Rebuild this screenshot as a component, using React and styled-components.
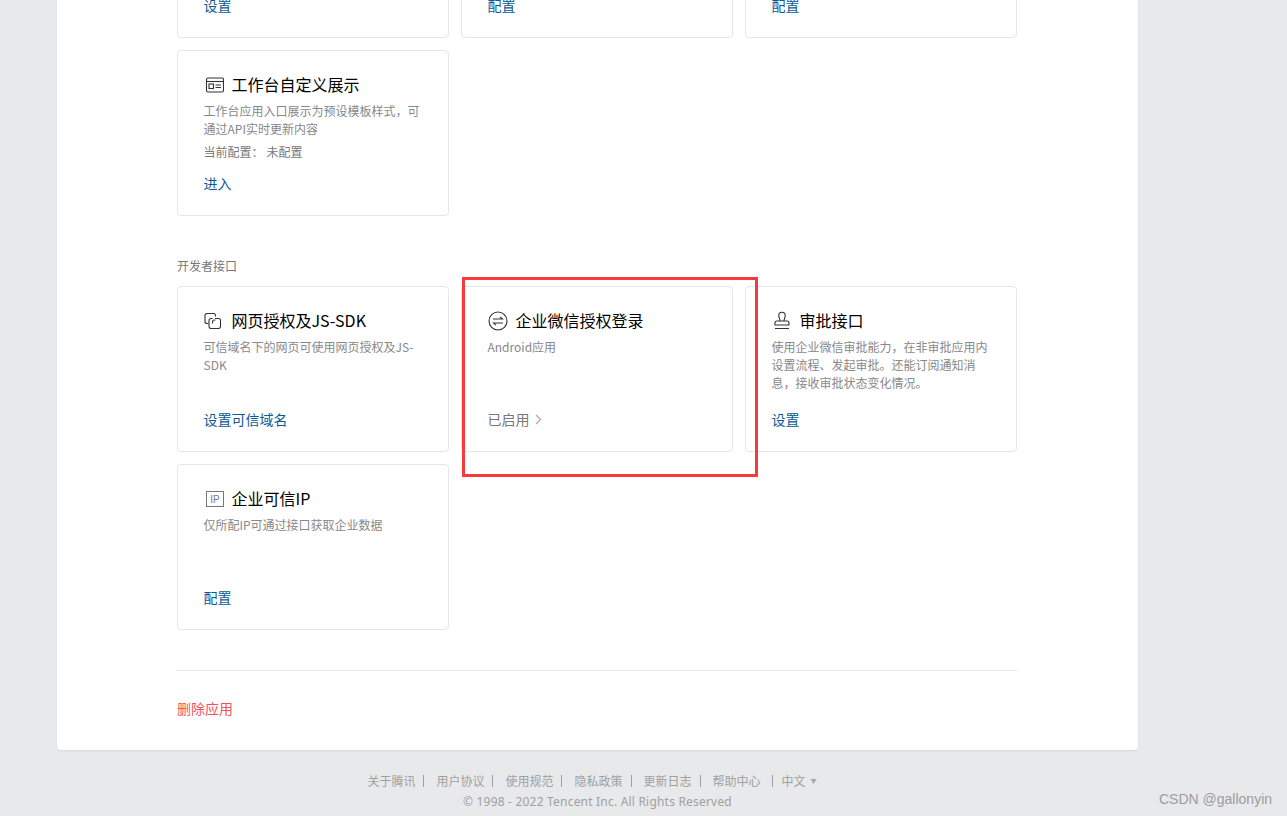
import React from "react";
import styled, { createGlobalStyle } from "styled-components";

const Global = createGlobalStyle`
  html, body { margin: 0; padding: 0; height: 816px; overflow: hidden; background: #e8e9eb; }
  body { font-family: "Noto Sans CJK SC", "Noto Sans", sans-serif; }
  * { box-sizing: border-box; }
`;
const Page = styled.div`
  position: relative; width: 1287px; height: 816px; overflow: hidden;
`;
const Column = styled.div`
  width: 1081px; margin-left: 57px; margin-top: -128px;
`;
const Panel = styled.main`
  background: #fff; border-radius: 0 0 4px 4px; padding: 0 121px 32px 120px;
  box-shadow: 0 1px 2px rgba(0,0,0,.08);
`;
const Grid = styled.section`
  display: grid; grid-template-columns: repeat(3, 272px); grid-auto-rows: 166px; gap: 12px;
`;
const Label = styled.h3`
  margin: 41px 0 12px; font-size: 12px; line-height: 17px; font-weight: 400; color: #787878;
`;
const Card = styled.article`
  display: flex; flex-direction: column; border: 1px solid #e4e6e9; border-radius: 4px;
  padding: 23px 26px 22px 25.5px; background: #fff;
`;
const Title = styled.div`
  display: flex; align-items: center; height: 22px; font-size: 16px; line-height: 22px; color: #000;
  margin-top: -1px; margin-bottom: 2px;
`;
const IconSlot = styled.span`
  display: flex; width: 28px; height: 22px; padding-top: 2px; align-items: center; color: #333;
  svg { display: block; }
`;
const Desc = styled.p`
  margin: 5px 0 0; font-size: 12px; line-height: 18px; color: #888;
`;
const Config = styled.p`
  margin: 5px 0 0; font-size: 12px; line-height: 18px; color: #787878;
`;
const ConfigValue = styled.span`
  margin-left: 3px;
`;
const Action = styled.a`
  margin-top: auto; font-size: 14px; line-height: 20px; display: flex; align-items: center;
  color: ${p => (p.$muted ? "#787878" : "#0b5a94")};
  svg { margin-left: 5px; }
`;
const Divider = styled.hr`
  border: 0; border-top: 1px solid #e4e6e9; margin: 40px 0 27px;
`;
const Delete = styled.a`
  display: block; font-size: 14px; line-height: 20px; color: #f4525b;
`;
const Footer = styled.footer`
  text-align: center; padding-top: 21px; font-size: 12px; color: #a0a0a0;
`;
const Links = styled.nav`
  display: flex; justify-content: center; align-items: center; height: 20px; line-height: 20px;
  padding-right: 11px;
`;
const Sep = styled.i`
  display: block; width: 1px; height: 12px; background: #a0a0a0;
  margin: ${p => (p.$last ? "0 9px 0 11px" : "0 12px 0 8px")};
`;
const Caret = styled.span`
  font-size: 6px; margin-left: 5px; color: #a8a8a8;
`;
const Copyright = styled.div`
  line-height: 20px; margin-top: 1px; letter-spacing: .2px; font-family: "Noto Sans", "Noto Sans CJK SC", sans-serif;
`;
const RedBox = styled.div`
  position: absolute; left: 462px; top: 277px; width: 296px; height: 200px;
  border: 3px solid #f83a3a; pointer-events: none;
`;
const Watermark = styled.div`
  position: absolute; left: 1159px; top: 790px; font: 14px/18px "Liberation Sans", sans-serif;
  color: #9c9c9c;
`;

const IconWidget = () => (
  <svg width="20" height="16" viewBox="0 0 20 16" fill="none" stroke="#333" strokeWidth="1.1">
    <rect x="2.500" y="1" width="17" height="14" rx="1.500" />
    <path d="M2.500 4.500h17" />
    <rect x="5" y="7" width="4.500" height="4.500" />
    <path d="M11.500 8h5.500M11.500 10.500h5.500" />
  </svg>
);
const IconLink = () => (
  <svg width="20" height="16" viewBox="0 0 20 16" fill="none" stroke="#333" strokeWidth="1.1">
    <path d="M4.500 10.500h-1.500a2 2 0 0 1-2-2V2.500a2 2 0 0 1 2-2h6.500a2 2 0 0 1 2 2v1" />
    <path d="M5 7.500a2 2 0 0 1 2-2h1.500M11 5.500h3.500a2 2 0 0 1 2 2v6a2 2 0 0 1-2 2H7a2 2 0 0 1-2-2v-6" />
    <path d="M8.500 10.500V9a2 2 0 0 1 2-2h1" />
  </svg>
);
const IconSwap = () => (
  <svg width="20" height="20" viewBox="0 0 20 20" fill="none" stroke="#333" strokeWidth="1.1">
    <circle cx="10" cy="10" r="9" />
    <path d="M5 8h9.500l-2.500-2.200M15 12H5.500L8 14.200" />
  </svg>
);
const IconStamp = () => (
  <svg width="20" height="20" viewBox="0 0 20 20" fill="none" stroke="#333" strokeWidth="1.1">
    <path d="M8 10C8 7.500 6.800 7 6.800 4.500a3.200 3.200 0 0 1 6.400 0C13.200 7 12 7.500 12 10" />
    <path d="M3 14v-2a2 2 0 0 1 2-2h10a2 2 0 0 1 2 2v2zM3 17.500h14" />
  </svg>
);
const IconIP = () => (
  <svg width="20" height="16" viewBox="0 0 20 16" fill="none">
    <rect x="2.500" y="0.500" width="17" height="15" stroke="#777" />
    <text x="11" y="11.500" textAnchor="middle" fontSize="10" fill="#777" fontFamily="Liberation Sans, sans-serif">IP</text>
  </svg>
);
const Chevron = () => (
  <svg width="7" height="11" viewBox="0 0 7 11" fill="none" stroke="#aaa" strokeWidth="1.3">
    <path d="M1 1l4.500 4.500L1 10" />
  </svg>
);

const appCards = [
  { action: "设置" },
  { action: "配置" },
  { action: "配置" },
  {
    icon: <IconWidget />, title: "工作台自定义展示",
    desc: "工作台应用入口展示为预设模板样式，可通过API实时更新内容",
    config: "未配置", action: "进入",
  },
];
const devCards = [
  { icon: <IconLink />, title: "网页授权及JS-SDK", desc: "可信域名下的网页可使用网页授权及JS-SDK", action: "设置可信域名" },
  { icon: <IconSwap />, title: "企业微信授权登录", desc: "Android应用", action: "已启用", muted: true },
  { icon: <IconStamp />, title: "审批接口", desc: "使用企业微信审批能力，在非审批应用内设置流程、发起审批。还能订阅通知消息，接收审批状态变化情况。", action: "设置" },
  { icon: <IconIP />, title: "企业可信IP", desc: "仅所配IP可通过接口获取企业数据", action: "配置" },
];
const footerLinks = ["关于腾讯", "用户协议", "使用规范", "隐私政策", "更新日志"];

const AppCard = ({ icon, title, desc, config, action, muted }) => (
  <Card>
    {title && <Title><IconSlot>{icon}</IconSlot>{title}</Title>}
    {desc && <Desc>{desc}</Desc>}
    {config && <Config>当前配置：<ConfigValue>{config}</ConfigValue></Config>}
    <Action $muted={muted}>{action}{muted && <Chevron />}</Action>
  </Card>
);

export default function App() {
  return (
    <Page>
      <Global />
      <Column>
        <Panel>
          <Grid>{appCards.map((c, i) => <AppCard key={i} {...c} />)}</Grid>
          <Label>开发者接口</Label>
          <Grid>{devCards.map((c, i) => <AppCard key={i} {...c} />)}</Grid>
          <Divider />
          <Delete>删除应用</Delete>
        </Panel>
        <Footer>
          <Links>
            {footerLinks.map(l => (
              <React.Fragment key={l}><span>{l}</span><Sep /></React.Fragment>
            ))}
            <span>帮助中心</span><Sep $last />
            <span>中文</span><Caret>▼</Caret>
          </Links>
          <Copyright>© 1998 - 2022 Tencent Inc. All Rights Reserved</Copyright>
        </Footer>
      </Column>
      <RedBox />
      <Watermark>CSDN @gallonyin</Watermark>
    </Page>
  );
}
